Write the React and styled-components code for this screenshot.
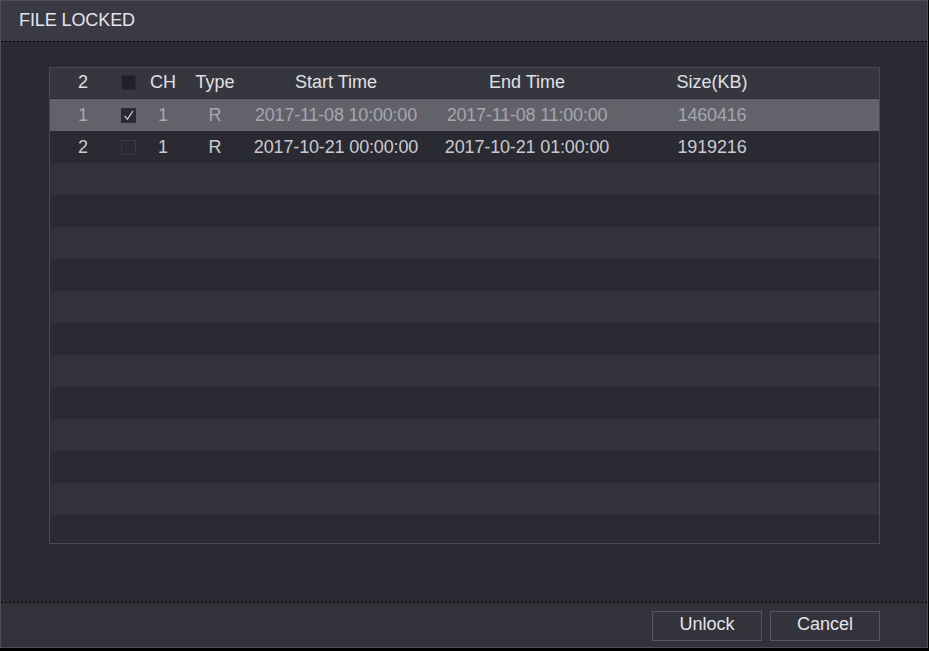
import React from "react";
import styled, { createGlobalStyle } from "styled-components";

const Global = createGlobalStyle`
  html, body { margin: 0; padding: 0; background: #000; }
  body { width: 929px; height: 651px; overflow: hidden; font-family: "Liberation Sans", Arial, sans-serif; }
  #root { width: 929px; height: 651px; }
`;

const Window = styled.div`
  width: 928px;
  height: 648px;
  box-sizing: border-box;
  border: 1px solid #4e4e57;
  background: #2a2a33;
  display: flex;
  flex-direction: column;
`;

const TitleBar = styled.div`
  height: 40px;
  flex: none;
  background: #3a3a44;
  display: flex;
  align-items: center;
  padding: 0 0 2px 18px;
  box-sizing: border-box;
  color: #e4e4e8;
  font-size: 18px;
  letter-spacing: -0.1px;
`;

const Divider = styled.div`
  height: 1px;
  flex: none;
  background: repeating-linear-gradient(90deg, #050507 0 2px, transparent 2px 4px);
  background-color: ${(p) => p.$bg};
`;

const Body = styled.div`
  height: 560px;
  flex: none;
  padding: 25px 47px 0 48px;
  box-sizing: border-box;
`;

const Table = styled.div`
  height: 477px;
  box-sizing: border-box;
  border: 1px solid #4a4a54;
  display: flex;
  flex-direction: column;
  overflow: hidden;
`;

const cols = "66px 24px 46px 58px 184px 198px 172px 1fr";

const HeaderRow = styled.div`
  height: 31px;
  flex: none;
  display: grid;
  grid-template-columns: ${cols};
  align-items: center;
  background: #36363f;
  border-bottom: 1px solid #2c2c34;
  box-sizing: border-box;
  color: #e0e0e4;
  font-size: 18px;
  padding-bottom: 2px;
`;

const Rows = styled.div`
  flex: 1;
  overflow: hidden;
`;

const Row = styled.div`
  height: 32px;
  display: grid;
  grid-template-columns: ${cols};
  align-items: center;
  font-size: 18px;
  background: ${(p) => (p.$selected ? "#62626b" : p.$odd ? "#32323b" : "#2a2a33")};
  color: ${(p) => (p.$selected ? "#a6a6ad" : "#cacace")};
  letter-spacing: ${(p) => (p.$selected ? "-0.2px" : "-0.15px")};
`;

const Cell = styled.div`
  text-align: center;
  white-space: nowrap;
  display: flex;
  justify-content: center;
  align-items: center;
`;

const Box = styled.div`
  width: 15px;
  height: 15px;
  box-sizing: border-box;
  border: 1px solid ${(p) => (p.$variant === "empty" ? "#3a3a44" : "#2c2c35")};
  background: ${(p) =>
    p.$variant === "header" ? "#202028" : p.$variant === "checked" ? "#2b2b34" : "transparent"};
  display: flex;
  align-items: center;
  justify-content: center;
`;

const Footer = styled.div`
  height: 44px;
  flex: none;
  background: #32323b;
  display: flex;
  align-items: center;
  justify-content: flex-end;
  gap: 8px;
  padding: 1px 47px 0 0;
  box-sizing: border-box;
`;

const Button = styled.button`
  width: 110px;
  height: 30px;
  box-sizing: border-box;
  background: #33333c;
  border: 1px solid #56565f;
  color: #e4e4e8;
  font-family: "Liberation Sans", Arial, sans-serif;
  font-size: 18px;
  padding: 0 0 2px 0;
  cursor: pointer;
`;

const Check = () => (
  <svg width="15" height="15" viewBox="0 0 15 15">
    <path d="M3 8 L6.2 12 L12.5 2.5" fill="none" stroke="#d6d6db" strokeWidth="1.3" />
  </svg>
);

const files = [
  { n: 1, checked: true, ch: 1, type: "R", start: "2017-11-08 10:00:00", end: "2017-11-08 11:00:00", size: "1460416" },
  { n: 2, checked: false, ch: 1, type: "R", start: "2017-10-21 00:00:00", end: "2017-10-21 01:00:00", size: "1919216" },
];

export default function App() {
  const total = 14;
  const rows = Array.from({ length: total }, (_, i) => files[i] || null);
  return (
    <>
      <Global />
      <Window>
        <TitleBar>FILE LOCKED</TitleBar>
        <Divider $bg="#2a2a33" />
        <Body>
          <Table>
            <HeaderRow>
              <Cell>2</Cell>
              <Cell>
                <Box $variant="header" />
              </Cell>
              <Cell>CH</Cell>
              <Cell>Type</Cell>
              <Cell>Start Time</Cell>
              <Cell>End Time</Cell>
              <Cell>Size(KB)</Cell>
              <Cell />
            </HeaderRow>
            <Rows>
              {rows.map((f, i) => (
                <Row key={i} $selected={i === 0} $odd={i % 2 === 0}>
                  {f && (
                    <>
                      <Cell>{f.n}</Cell>
                      <Cell>
                        <Box $variant={f.checked ? "checked" : "empty"}>{f.checked && <Check />}</Box>
                      </Cell>
                      <Cell>{f.ch}</Cell>
                      <Cell>{f.type}</Cell>
                      <Cell>{f.start}</Cell>
                      <Cell>{f.end}</Cell>
                      <Cell>{f.size}</Cell>
                      <Cell />
                    </>
                  )}
                </Row>
              ))}
            </Rows>
          </Table>
        </Body>
        <Divider $bg="#32323b" />
        <Footer>
          <Button>Unlock</Button>
          <Button>Cancel</Button>
        </Footer>
      </Window>
    </>
  );
}
